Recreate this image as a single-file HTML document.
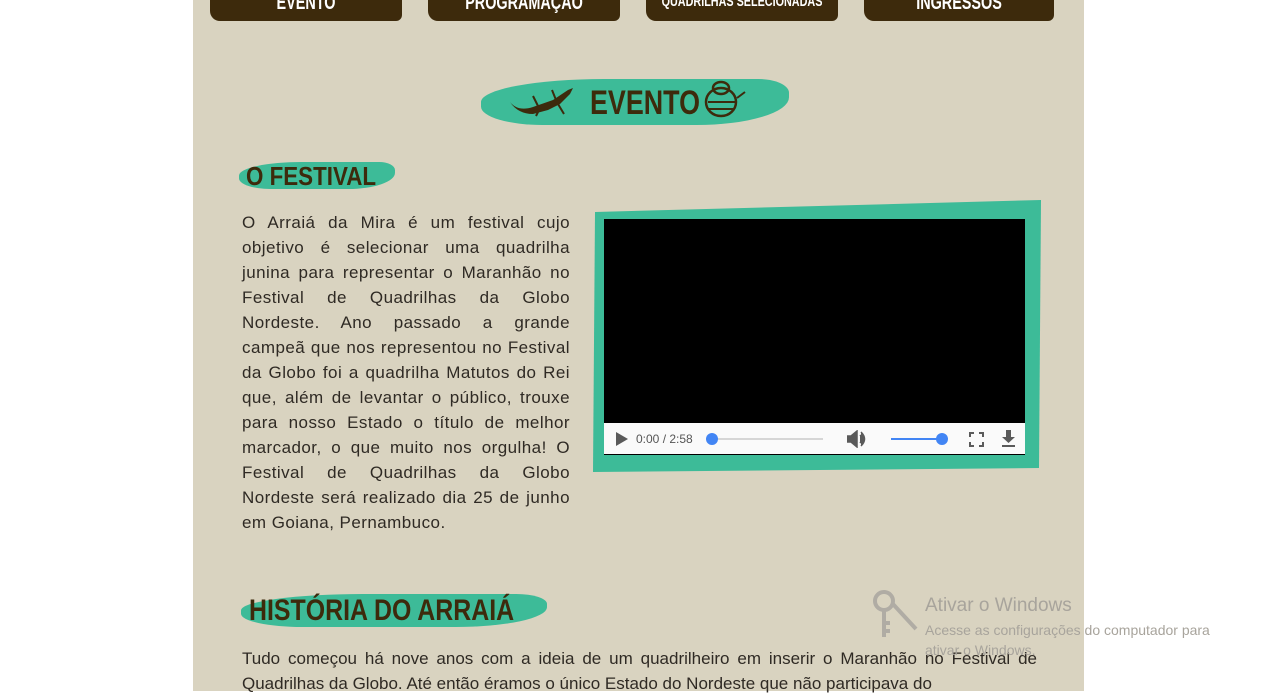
<!DOCTYPE html>
<html><head><meta charset="utf-8"><style>
*{margin:0;padding:0;box-sizing:border-box}
body{width:1262px;height:691px;overflow:hidden;background:#fff;font-family:"Liberation Sans",sans-serif;position:relative}
#page{position:absolute;left:193px;top:0;width:891px;height:691px;background:#d9d3c0}
.nav{position:absolute;top:-6px;height:27px;background:#3d2a0c;border-radius:2px 2px 6px 10px;overflow:hidden}
.nav span{position:absolute;left:50%;top:0;white-space:nowrap;color:#fff;font-weight:bold;font-size:20px;line-height:19px;transform:translateX(-50%) scaleX(0.72)}
.brush{position:absolute;background:#3dbb98;border-radius:40% 10% 30% 20%/50% 30% 60% 40%}
.h{position:absolute;color:#3d2a0c;font-weight:bold;white-space:nowrap;transform-origin:0 0;transform:scaleX(0.72)}
p{position:absolute;color:#2f2a24;font-size:17px;line-height:25px;text-align:justify}
</style></head><body>
<div id="page">
<div class="nav" style="left:17px;width:192px"><span>EVENTO</span></div>
<div class="nav" style="left:235px;width:192px"><span>PROGRAMAÇÃO</span></div>
<div class="nav" style="left:453px;width:192px"><span style="font-size:15px;line-height:16px">QUADRILHAS SELECIONADAS</span></div>
<div class="nav" style="left:671px;width:190px"><span>INGRESSOS</span></div>

<div class="brush" style="left:288px;top:79px;width:308px;height:46px"></div>
<svg style="position:absolute;left:315px;top:82px" width="80" height="40" viewBox="0 0 80 40"><path d="M2 20 Q10 30 25 25 L45 18 L60 8 L65 6 L62 12 L52 22 L40 28 L25 32 Q10 32 2 20Z" fill="#3d2a0c"/><path d="M30 24 L25 14 M32 26 L28 34 M48 18 L44 8 M50 22 L56 32" stroke="#3d2a0c" stroke-width="2"/></svg>
<div class="h" style="left:397px;top:84px;font-size:34px;transform:scaleX(0.79)">EVENTO</div>
<svg style="position:absolute;left:510px;top:78px" width="45" height="42" viewBox="0 0 45 42"><ellipse cx="18" cy="24" rx="15" ry="14" fill="none" stroke="#3d2a0c" stroke-width="2.5"/><ellipse cx="18" cy="10" rx="8" ry="6" fill="none" stroke="#3d2a0c" stroke-width="2.5"/><path d="M5 24 H32 M6 31 H30 M34 20 L42 14" stroke="#3d2a0c" stroke-width="2"/></svg>

<div class="brush" style="left:46px;top:162px;width:156px;height:27px"></div>
<div class="h" style="left:53px;top:161px;font-size:26px;transform:scaleX(0.86)">O FESTIVAL</div>

<p style="left:49px;top:210px;width:328px;letter-spacing:0.45px">O Arraiá da Mira é um festival cujo objetivo é selecionar uma quadrilha junina para representar o Maranhão no Festival de Quadrilhas da Globo Nordeste. Ano passado a grande campeã que nos representou no Festival da Globo foi a quadrilha Matutos do Rei que, além de levantar o público, trouxe para nosso Estado o título de melhor marcador, o que muito nos orgulha! O Festival de Quadrilhas da Globo Nordeste será realizado dia 25 de junho em Goiana, Pernambuco.</p>

<svg style="position:absolute;left:400px;top:200px" width="449" height="274"><polygon points="2,12 448,0 446,268 0,272" fill="#3dbb98"/></svg>
<div style="position:absolute;left:411px;top:219px;width:421px;height:236px;background:#000"></div>
<div style="position:absolute;left:411px;top:423px;width:421px;height:31px;background:#fafafa;font-size:12px;color:#555">
<svg style="position:absolute;left:12px;top:9px" width="12" height="14"><path d="M0 0 L12 7 L0 14Z" fill="#5a5a5a"/></svg>
<span style="position:absolute;left:32px;top:9px">0:00 / 2:58</span>
<div style="position:absolute;left:106px;top:15px;width:113px;height:2px;background:#d6d6d6"></div>
<div style="position:absolute;left:102px;top:10px;width:12px;height:12px;border-radius:50%;background:#4285f4"></div>
<svg style="position:absolute;left:243px;top:7px" width="20" height="18"><path d="M0 6 H4 L10 1 V17 L4 12 H0Z M13 5 Q17 9 13 13 M14 2 Q21 9 14 16" fill="#5a5a5a" stroke="#5a5a5a" stroke-width="1.5"/></svg>
<div style="position:absolute;left:287px;top:15px;width:52px;height:2px;background:#4285f4"></div>
<div style="position:absolute;left:332px;top:10px;width:12px;height:12px;border-radius:50%;background:#4285f4"></div>
<svg style="position:absolute;left:365px;top:9px" width="15" height="15"><path d="M1 5V1H5 M10 1H14V5 M14 10V14H10 M5 14H1V10" fill="none" stroke="#5a5a5a" stroke-width="2"/></svg>
<svg style="position:absolute;left:397px;top:7px" width="15" height="18"><path d="M5 0H10V7H14L7.5 13L1 7H5Z" fill="#5a5a5a"/><rect x="1" y="15" width="13" height="2" fill="#5a5a5a"/></svg>
</div>

<div class="brush" style="left:48px;top:594px;width:306px;height:33px"></div>
<div class="h" style="left:56px;top:594px;font-size:30px;transform:scaleX(0.83)">HISTÓRIA DO ARRAIÁ</div>
<p style="left:49px;top:646px;width:795px">Tudo começou há nove anos com a ideia de um quadrilheiro em inserir o Maranhão no Festival de Quadrilhas da Globo. Até então éramos o único Estado do Nordeste que não participava do</p>
</div>
<svg style="position:absolute;left:872px;top:589px" width="46" height="50"><circle cx="12" cy="12" r="9" fill="none" stroke="#b0aca4" stroke-width="4"/><path d="M12 21V48 M12 34H18 M12 42H18 M20 14L44 40" stroke="#b0aca4" stroke-width="4"/></svg>
<div style="position:absolute;left:925px;top:595px;color:#a8a49c;font-size:19px">Ativar o Windows</div>
<div style="position:absolute;left:925px;top:620px;color:#a8a49c;font-size:14px;line-height:20px;width:320px">Acesse as configurações do computador para ativar o Windows.</div>
</body></html>
